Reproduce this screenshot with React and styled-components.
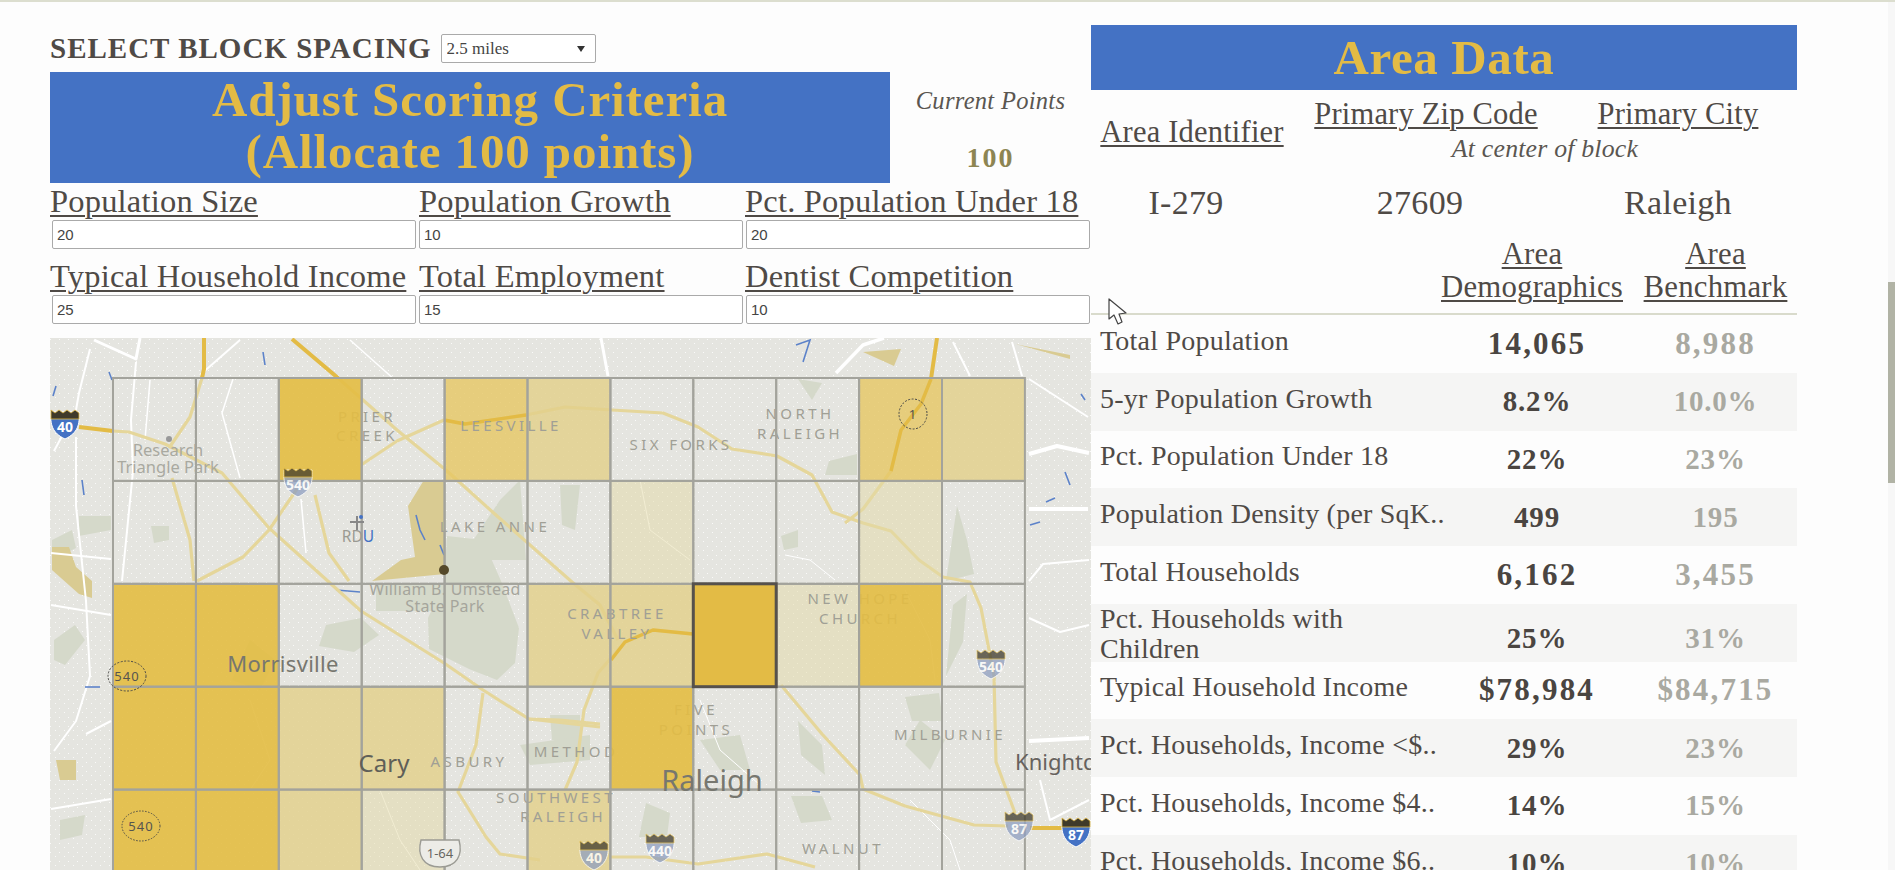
import React from "react";
import styled, { createGlobalStyle } from "styled-components";

const serif = '"Liberation Serif", "DejaVu Serif", serif';
const sans = '"Noto Sans", "Open Sans", sans-serif';
const BLUE = "#4472c4";
const GOLD = "#e3bb45";
const INK = "#4f4a46";

const Global = createGlobalStyle`
  html, body { margin: 0; padding: 0; background: #fdfdfd; overflow: hidden; }
  #root { height: 870px; overflow: hidden; }
`;

const Page = styled.div`
  position: relative;
  box-sizing: border-box;
  width: 1895px;
  height: 870px;
  overflow: hidden;
  border-top: 2px solid #dcdecf;
  padding-left: 50px;
  display: grid;
  grid-template-columns: 1041px 706px;
  align-items: start;
  font-family: ${serif};
  color: ${INK};
`;

const LeftColumn = styled.section`
  display: flex;
  flex-direction: column;
  padding-top: 32px;
`;

const SpacingRow = styled.div`
  display: flex;
  align-items: center;
  gap: 9px;
  height: 29px;
  margin-bottom: 9px;
`;

const SpacingLabel = styled.span`
  font-size: 29px;
  font-weight: 700;
  letter-spacing: 1px;
  white-space: nowrap;
`;

const SelectWrap = styled.div`
  position: relative;
  width: 155px;
  height: 29px;
  &::after {
    content: "";
    position: absolute;
    right: 11px;
    top: 12px;
    border-left: 4px solid transparent;
    border-right: 4px solid transparent;
    border-top: 6px solid #333;
  }
`;

const Select = styled.select`
  appearance: none;
  box-sizing: border-box;
  width: 100%;
  height: 100%;
  background: #fff;
  border: 1px solid #aaa;
  border-radius: 2px;
  padding: 0 5px;
  color: #444;
  font: 17px ${serif};
`;

const ScoreRow = styled.div`
  display: grid;
  grid-template-columns: 840px 201px;
  height: 111px;
`;

const Banner = styled.div`
  box-sizing: border-box;
  display: flex;
  align-items: center;
  justify-content: center;
  text-align: center;
  background: ${BLUE};
  color: ${GOLD};
  font-weight: 700;
  font-size: ${(p) => p.$size}px;
  line-height: ${(p) => p.$leading}px;
  letter-spacing: ${(p) => p.$track}px;
  height: ${(p) => p.$height}px;
  padding-bottom: ${(p) => p.$lift || 0}px;
`;

const PointsBox = styled.div`
  display: flex;
  flex-direction: column;
  align-items: center;
  padding-top: 16px;
`;

const PointsLabel = styled.div`
  font-style: italic;
  font-size: 24.5px;
  letter-spacing: 0.3px;
  line-height: 26px;
  color: #5a5651;
`;

const PointsValue = styled.div`
  margin-top: 29px;
  font-weight: 700;
  font-size: 28px;
  line-height: 30px;
  letter-spacing: 2px;
  color: #8d8552;
`;

const CriteriaGrid = styled.div`
  display: grid;
  grid-template-columns: 369px 326px 346px;
  padding-top: 3px;
`;

const Criterion = styled.label`
  display: flex;
  flex-direction: column;
`;

const CriterionName = styled.span`
  height: 34px;
  line-height: 31px;
  font-size: 32.5px;
  letter-spacing: 0.2px;
  text-decoration: underline;
  text-decoration-thickness: 2px;
  text-underline-offset: 3px;
  white-space: nowrap;
  margin-top: ${(p) => (p.$second ? 12 : 0)}px;
`;

const PointsInput = styled.input`
  box-sizing: border-box;
  width: calc(100% - ${(p) => p.$inset}px);
  margin-left: ${(p) => p.$lead}px;
  height: 29px;
  border: 1px solid #aaa;
  border-radius: 2px;
  background: #fff;
  padding: 0 4px;
  color: #444;
  font: 15px "Liberation Sans", sans-serif;
`;

const MapFrame = styled.svg`
  display: block;
  margin-top: 14px;
  width: 1041px;
  height: 532px;
`;

const RightColumn = styled.section`
  display: flex;
  flex-direction: column;
  padding-top: 23px;
`;

const IdHeader = styled.div`
  display: grid;
  grid-template-columns: 202px 266px 238px;
  grid-template-rows: 33px 36px;
  padding-top: 8px;
  text-align: center;
`;

const HeaderLink = styled.div`
  font-size: 30.5px;
  letter-spacing: 0.2px;
  line-height: 33px;
  text-decoration: underline;
  text-decoration-thickness: 2px;
  text-underline-offset: 3px;
  white-space: nowrap;
  align-self: ${(p) => (p.$span ? "center" : "start")};
  grid-row: ${(p) => (p.$span ? "1 / span 2" : "auto")};
`;

const BlockNote = styled.div`
  grid-column: 2 / span 2;
  grid-row: 2;
  font-style: italic;
  font-size: 25.8px;
  letter-spacing: 0.2px;
  line-height: 36px;
  color: #5a5651;
`;

const IdValues = styled.div`
  display: grid;
  grid-template-columns: 202px 266px 238px;
  margin-top: 16px;
  height: 40px;
  font-size: 34px;
  line-height: 40px;
  letter-spacing: 0.3px;
  text-align: center;
  & > :not(:last-child) { padding-right: 12px; }
`;

const ColumnHeads = styled.div`
  display: grid;
  grid-template-columns: 349px 194px 163px;
  margin-top: 15px;
  height: 75px;
  border-bottom: 2px solid #d9dbcc;
  text-align: center;
`;

const ColumnHead = styled.div`
  grid-column: ${(p) => p.$col};
  font-size: 30.8px;
  letter-spacing: 0.2px;
  line-height: 33px;
  text-decoration: underline;
  text-decoration-thickness: 2px;
  text-underline-offset: 3px;
  padding-right: ${(p) => p.$shift}px;
  white-space: nowrap;
`;

const Rows = styled.div`
  display: grid;
  grid-auto-rows: 57.75px;
`;

const Row = styled.div`
  display: grid;
  grid-template-columns: 349px 194px 163px;
  align-items: center;
  text-align: center;
  background: ${(p) => (p.$shaded ? "#f5f5f4" : "transparent")};
  overflow: hidden;
`;

const RowLabel = styled.div`
  box-sizing: border-box;
  padding: 0 0 ${(p) => (p.$multi ? 9 : 6)}px 9px;
  text-align: left;
  font-size: 28px;
  letter-spacing: 0.22px;
  line-height: 30px;
  white-space: nowrap;
`;

const RowValue = styled.div`
  font-weight: 700;
  font-size: ${(p) => (p.$wide ? 31 : 29)}px;
  letter-spacing: ${(p) => (p.$wide ? 2.2 : 0.8)}px;
  color: ${(p) => (p.$bench ? "#a9a9a1" : "#4a4541")};
`;

const ScrollThumb = styled.div`
  position: absolute;
  right: 0;
  top: 280px;
  width: 7px;
  height: 201px;
  background: #b1b3a5;
`;

const ScrollTrack = styled.div`
  position: absolute;
  right: 0;
  top: 0;
  width: 7px;
  height: 100%;
  background: #f7f7f7;
`;

const Pointer = styled.svg`
  position: absolute;
  left: 1108px;
  top: 296px;
  width: 20px;
  height: 27px;
`;

const Hood = styled.text`
  font-family: ${sans};
  font-size: 15px;
  letter-spacing: 3.4px;
  fill: #a09f95;
  text-anchor: middle;
`;

const Place = styled.text`
  font-family: ${sans};
  font-size: ${(p) => p.$size}px;
  letter-spacing: ${(p) => p.$track || 0}px;
  fill: ${(p) => p.$color};
  text-anchor: middle;
`;

const ShieldText = styled.text`
  font-family: ${sans};
  font-weight: 700;
  font-size: ${(p) => p.$size}px;
  fill: ${(p) => p.$color};
  text-anchor: middle;
`;

const ROWS = [
  { label: "Total Population", value: "14,065", bench: "8,988" },
  { label: "5-yr Population Growth", value: "8.2%", bench: "10.0%" },
  { label: "Pct. Population Under 18", value: "22%", bench: "23%" },
  { label: "Population Density (per SqK..", value: "499", bench: "195" },
  { label: "Total Households", value: "6,162", bench: "3,455" },
  { label: "Pct. Households with|Children", value: "25%", bench: "31%" },
  { label: "Typical Household Income", value: "$78,984", bench: "$84,715" },
  { label: "Pct. Households, Income <$..", value: "29%", bench: "23%" },
  { label: "Pct. Households, Income $4..", value: "14%", bench: "15%" },
  { label: "Pct. Households, Income $6..", value: "10%", bench: "10%" },
];

const CRITERIA = [
  { name: "Population Size", value: "20", lead: 2, inset: 5 },
  { name: "Population Growth", value: "10", lead: 0, inset: 2 },
  { name: "Pct. Population Under 18", value: "20", lead: 1, inset: 2 },
  { name: "Typical Household Income", value: "25", lead: 2, inset: 5, second: true },
  { name: "Total Employment", value: "15", lead: 0, inset: 2, second: true },
  { name: "Dentist Competition", value: "10", lead: 1, inset: 2, second: true },
];

const LEVELS = [
  [0, 0, 3, 0, 2, 1, 0, 0, 0, 2, 1],
  [0, 0, 0, 0, 0, 0, 5, 0, 0, 5, 0],
  [3, 3, 0, 0, 0, 1, 1, 4, 5, 3, 0],
  [3, 3, 1, 1, 0, 0, 3, 0, 0, 0, 0],
  [3, 3, 1, 5, 0, 1, 0, 0, 0, 0, 0],
];
const CELL_FILL = {
  1: ["#e2d08a", 0.82],
  2: ["#e6c763", 0.8],
  3: ["#e3bc42", 0.9],
  4: ["#e3bc42", 1],
  5: ["#e4d9a6", 0.5],
};

const PARKS = [
  "447,536 483,540 501,581 519,628 515,663 497,680 469,669 429,649 428,618 444,584",
  "376,584 444,584 444,611 376,611",
  "326,625 361,618 379,635 354,652 319,646",
  "79,516 111,516 111,530 79,536",
  "52,540 72,530 76,548 52,560",
  "151,526 169,526 169,540 154,543",
  "953,605 967,594 963,642 946,676",
  "957,506 967,540 974,574 946,581",
  "798,721 822,745 825,775 801,755",
  "781,536 798,530 798,547 784,550",
  "905,697 939,693 943,721 912,721",
  "791,796 822,796 832,820 801,823",
  "646,803 670,813 667,837 639,837",
  "798,379 822,383 812,400",
  "829,461 857,454 857,475 825,475",
  "560,485 580,485 575,530 562,525",
  "550,715 580,715 580,740 552,740",
  "520,745 590,735 590,760 530,765",
  "54,640 75,625 85,640 65,665 54,660",
  "60,820 85,815 82,835 60,840",
  "700,740 740,735 750,770 720,770",
  "460,560 500,500 520,480 526,560",
  "250,640 275,660 260,690 232,680",
  "920,720 945,740 930,770 905,745",
];
const TAN = [
  "424,480 445,480 445,574 372,581 401,560 415,557 408,506",
  "52,547 69,547 76,567 92,581 92,598 79,594 52,570",
  "863,352 901,349 894,366",
  "994,340 1070,355 1070,359 1019,345",
  "56,760 76,760 76,780 60,780",
];
const WHITE_ROADS = [
  ["94,340 136,359 140,338", 3],
  ["90,349 79,393 76,410 54,451", 2],
  ["136,362 131,420 133,471 122,581", 2],
  ["76,437 76,506 86,601 90,676 76,721 54,751", 2],
  ["51,553 111,559", 2],
  ["51,605 111,615", 2],
  ["86,734 111,721", 2],
  ["51,809 111,799", 2],
  ["233,379 222,413 240,478", 1.5],
  ["301,499 306,553", 1.5],
  ["953,342 970,376", 2],
  ["1012,342 1022,376", 2],
  ["1029,454 1057,446 1089,453", 4],
  ["1029,509 1088,509", 4],
  ["1029,741 1089,738", 4],
  ["1029,379 1088,417", 2],
  ["1029,581 1043,564 1089,560", 2],
  ["1029,618 1060,632 1089,625", 2],
  ["836,373 863,345 884,338", 3.5],
  ["601,338 608,376", 3],
  ["240,340 200,375", 2],
  ["1040,780 1050,820 1089,800", 2],
  ["150,380 145,440", 1.5],
  ["350,340 395,380", 1.5],
  ["785,555 810,560 835,580", 1],
  ["640,480 650,530 690,560", 1],
  ["905,590 930,640 935,680", 1],
  ["700,700 720,750 760,785", 1],
  ["910,800 950,840 960,870", 1],
  ["380,790 400,840 420,870", 1],
  ["250,700 270,760 250,790", 1],
];
const HIGHWAYS_BRIGHT = [
  "79,427 113,431",
  "204,338 204,369 202,378",
  "292,339 338,378",
  "937,338 931,379",
  "1030,828 1063,828",
];
const HIGHWAYS_OVER = [
  "931,379 921,404 901,430 891,471",
  "444,420 465,424 526,415",
  "693,634 653,630 625,642 611,660",
];
const HIGHWAYS = [
  "113,431 129,432 165,444 222,473 269,528 361,611 444,663 483,690 529,719 560,720 600,724",
  "202,378 190,417 169,448",
  "338,378 397,430 447,471 497,516 572,582 600,605 618,640",
  "361,465 397,441 444,420 465,424 526,415 565,407 612,410 663,413 698,427 732,449 777,456 812,475 832,512 863,523 891,531 919,560 943,577 970,582 981,608 994,676 996,762 1015,813",
  "901,430 891,471 863,509 845,523",
  "781,685 822,734 860,775 863,789 905,806 974,825 1008,826",
  "693,634 653,630 625,642 598,673 584,710 577,762 565,790",
  "605,857 646,857 698,864 767,854 815,867",
  "315,495 329,553 349,581",
  "197,581 243,557 269,530 297,489",
  "172,478 190,540 194,581",
  "483,693 476,745 458,792 486,837 500,854 540,860",
  "529,719 600,727",
];
const WATER = [
  "109,372 112,380",
  "56,386 53,396",
  "82,480 84,495",
  "263,352 265,365",
  "416,515 420,530 425,540",
  "440,545 444,555",
  "796,345 810,340 803,362",
  "1081,394 1085,400",
  "1065,472 1070,485",
  "1046,502 1055,498",
  "1030,525 1040,522",
  "85,687 100,687",
  "336,590 360,592",
  "812,791 820,792",
];

const path = (pts) => "M" + pts.split(" ").join(" L");

function Interstate({ x, y, label, scale = 1, faded }) {
  const body = faded ? "#8f9fc0" : BLUE;
  return (
    <g transform={`translate(${x} ${y}) scale(${scale})`} opacity={faded ? 0.75 : 1}>
      <path d="M-14 -12 L14 -12 C15 0 13 9 0 15 C-13 9 -15 0 -14 -12Z" fill={body} stroke="#fff" strokeWidth="1" />
      <path d="M-14 -5 L14 -5 L14 -11 L10 -14 L6 -11 L2 -14 L-2 -11 L-6 -14 L-10 -11 L-14 -14Z" fill="#3f3a2a" stroke={GOLD} strokeWidth="0.8" />
      <ShieldText x="0" y="8" $size={14} $color="#fff">{label}</ShieldText>
    </g>
  );
}

function RouteOval({ x, y, label, rx = 19, dashed = "2 1.5" }) {
  return (
    <g>
      <ellipse cx={x} cy={y} rx={rx} ry="15" fill="none" stroke="#4a4a48" strokeWidth="1" strokeDasharray={dashed} />
      <Place x={x} y={y + 5} $size={13} $track={1} $color="#55554f">{label}</Place>
    </g>
  );
}

function RouteShield({ x, y, label }) {
  return (
    <g>
      <path
        d={`M${x - 19} ${y - 12} L${x + 19} ${y - 12} C${x + 23} ${y + 3} ${x + 17} ${y + 15} ${x} ${y + 15} C${x - 17} ${y + 15} ${x - 23} ${y + 3} ${x - 19} ${y - 12}Z`}
        fill="#ecece7"
        stroke="#9b9b94"
        strokeWidth="1.4"
      />
      <Place x={x} y={y + 6} $size={13} $color="#66665f">{label}</Place>
    </g>
  );
}

function CellLayer({ match }) {
  const colW = 82.9;
  const rowH = 102.9;
  return LEVELS.map((row, j) =>
    row.map((level, i) => {
      if (!match(level)) return null;
      const [fill, opacity] = CELL_FILL[level];
      return (
        <rect key={`${i}-${j}`} x={113 + colW * i} y={378 + rowH * j} width={colW} height={rowH} fill={fill} opacity={opacity} />
      );
    })
  );
}

function AreaMap() {
  const colW = 82.9;
  const rowH = 102.9;
  return (
    <MapFrame viewBox="50 338 1041 532" aria-label="Map of Raleigh area scoring blocks">
      <defs>
        <pattern id="stipple" width="9" height="9" patternUnits="userSpaceOnUse">
          <rect x="1" y="1" width="1" height="1" fill="#fff" opacity="0.8" />
          <rect x="5" y="6" width="1" height="1" fill="#fff" opacity="0.8" />
        </pattern>
      </defs>
      <rect x="50" y="338" width="1041" height="532" fill="#e5e5e0" />
      <rect x="50" y="338" width="1041" height="532" fill="url(#stipple)" />
      {PARKS.map((p) => <polygon key={p} points={p} fill="#d5d9ca" />)}
      {TAN.map((p) => <polygon key={p} points={p} fill="#d9cb92" />)}
      {WHITE_ROADS.map(([p, w]) => (
        <path key={p} d={path(p)} fill="none" stroke="#fff" strokeWidth={w} strokeLinejoin="round" />
      ))}
      {WATER.map((p) => <path key={p} d={path(p)} fill="none" stroke="#5c82c9" strokeWidth="1.6" />)}
      {HIGHWAYS.map((p) => (
        <path key={p} d={path(p)} fill="none" stroke="#e5d69a" strokeWidth="3.2" strokeLinejoin="round" />
      ))}
      {HIGHWAYS_BRIGHT.map((p) => (
        <path key={p} d={path(p)} fill="none" stroke={GOLD} strokeWidth="4" strokeLinejoin="round" />
      ))}

      <CellLayer match={(l) => l === 1 || l === 2 || l === 5} />
      {HIGHWAYS_OVER.map((p) => (
        <path key={p} d={path(p)} fill="none" stroke={GOLD} strokeWidth="3.4" strokeLinejoin="round" />
      ))}

      <Place x="168" y="456" $size={16.5} $color="#a9a9a0">Research</Place>
      <Place x="168" y="473" $size={16.5} $color="#a9a9a0">Triangle Park</Place>
      <Hood x="367" y="422">PRIER</Hood>
      <Hood x="367" y="441">CREEK</Hood>
      <Hood x="511" y="431">LEESVILLE</Hood>
      <Hood x="495" y="532">LAKE ANNE</Hood>
      <Hood x="681" y="450">SIX FORKS</Hood>
      <Hood x="800" y="419">NORTH</Hood>
      <Hood x="800" y="439">RALEIGH</Hood>
      <Hood x="617" y="619">CRABTREE</Hood>
      <Hood x="617" y="639">VALLEY</Hood>
      <Hood x="860" y="604">NEW HOPE</Hood>
      <Hood x="860" y="624">CHURCH</Hood>
      <Hood x="696" y="715">FIVE</Hood>
      <Hood x="696" y="735">POINTS</Hood>
      <Hood x="950" y="740">MILBURNIE</Hood>
      <Hood x="469" y="767">ASBURY</Hood>
      <Hood x="576" y="757">METHOD</Hood>
      <Hood x="556" y="803">SOUTHWEST</Hood>
      <Hood x="563" y="822">RALEIGH</Hood>
      <Hood x="843" y="854">WALNUT</Hood>
      <Place x="445" y="595" $size={16} $track={0.3} $color="#a5a59c">William B. Umstead</Place>
      <Place x="445" y="612" $size={16} $track={0.3} $color="#a5a59c">State Park</Place>

      <CellLayer match={(l) => l === 3} />

      {LEVELS.map((row, j) =>
        row.map((level, i) => (
          <rect key={`g${i}-${j}`} x={113 + colW * i} y={378 + rowH * j} width={colW} height={rowH} fill="none" stroke="#a3a39c" strokeWidth="2" />
        ))
      )}
      <rect x={113 + colW * 7} y={378 + rowH * 2} width={colW} height={rowH} fill={GOLD} stroke="#56514c" strokeWidth="3" />

      <path d="M357 516 L357 530 M350 522 L364 522" stroke="#888" strokeWidth="2" />
      <circle cx="361" cy="517" r="2" fill={BLUE} />
      <Place x="358" y="542" $size={15.5} $color="#9a9a92">RD<tspan fill={BLUE}>U</tspan></Place>
      <circle cx="444" cy="570" r="5" fill="#55492a" />
      <circle cx="169" cy="439" r="3" fill="#999" />

      <Place x="283" y="672" $size={22} $track={0.3} $color="#77776f">Morrisville</Place>
      <Place x="384" y="772" $size={24} $color="#5f5f58">Cary</Place>
      <Place x="712" y="791" $size={29} $color="#77776f">Raleigh</Place>
      <Place x="1071" y="770" $size={22} $color="#67625e">Knightdale</Place>

      <Interstate x={65} y={424} label="40" />
      <Interstate x={298} y={482} label="540" faded />
      <Interstate x={991} y={664} label="540" faded />
      <Interstate x={1019} y={826} label="87" faded />
      <Interstate x={1076} y={832} label="87" />
      <Interstate x={594} y={855} label="40" faded />
      <Interstate x={660} y={848} label="440" faded />
      <RouteOval x={127} y={676} label="540" />
      <RouteOval x={141} y={826} label="540" dashed="1.5 1.5" />
      <RouteOval x={913} y={414} label="1" rx={14} dashed="2 1.5" />
      <RouteShield x={440} y={852} label="1-64" />
    </MapFrame>
  );
}

export default function App() {
  return (
    <>
      <Global />
      <Page>
        <LeftColumn>
          <SpacingRow>
            <SpacingLabel>SELECT BLOCK SPACING</SpacingLabel>
            <SelectWrap>
              <Select defaultValue="2.5 miles">
                <option>2.5 miles</option>
                <option>5 miles</option>
              </Select>
            </SelectWrap>
          </SpacingRow>
          <ScoreRow>
            <Banner $size={49} $leading={52} $track={0.9} $height={111} $lift={4}>
              <div>Adjust Scoring Criteria<br />(Allocate 100 points)</div>
            </Banner>
            <PointsBox>
              <PointsLabel>Current Points</PointsLabel>
              <PointsValue>100</PointsValue>
            </PointsBox>
          </ScoreRow>
          <CriteriaGrid>
            {CRITERIA.map((c) => (
              <Criterion key={c.name}>
                <CriterionName $second={c.second}>{c.name}</CriterionName>
                <PointsInput defaultValue={c.value} $lead={c.lead} $inset={c.inset} />
              </Criterion>
            ))}
          </CriteriaGrid>
          <AreaMap />
        </LeftColumn>

        <RightColumn>
          <Banner $size={49} $leading={65} $track={0.6} $height={65}>Area Data</Banner>
          <IdHeader>
            <HeaderLink $span>Area Identifier</HeaderLink>
            <HeaderLink>Primary Zip Code</HeaderLink>
            <HeaderLink>Primary City</HeaderLink>
            <BlockNote>At center of block</BlockNote>
          </IdHeader>
          <IdValues>
            <div>I-279</div>
            <div>27609</div>
            <div>Raleigh</div>
          </IdValues>
          <ColumnHeads>
            <ColumnHead $col={2} $shift={10}>Area<br />Demographics</ColumnHead>
            <ColumnHead $col={3} $shift={0}>Area<br />Benchmark</ColumnHead>
          </ColumnHeads>
          <Rows>
            {ROWS.map((r, i) => (
              <Row key={r.label} $shaded={i % 2 === 1}>
                <RowLabel $multi={r.label.includes("|")}>
                  {r.label.split("|").map((line) => <div key={line}>{line}</div>)}
                </RowLabel>
                <RowValue $wide={r.value.includes(",")}>{r.value}</RowValue>
                <RowValue $bench $wide={r.bench.includes(",")}>{r.bench}</RowValue>
              </Row>
            ))}
          </Rows>
        </RightColumn>

        <ScrollTrack />
        <ScrollThumb />
        <Pointer viewBox="0 0 20 27" aria-hidden="true">
          <path d="M1 1 L1 21 L6 17 L10 26 L14 24 L11 16 L18 15 Z" fill="#fff" stroke="#444" strokeWidth="1.2" strokeLinejoin="round" />
        </Pointer>
      </Page>
    </>
  );
}
